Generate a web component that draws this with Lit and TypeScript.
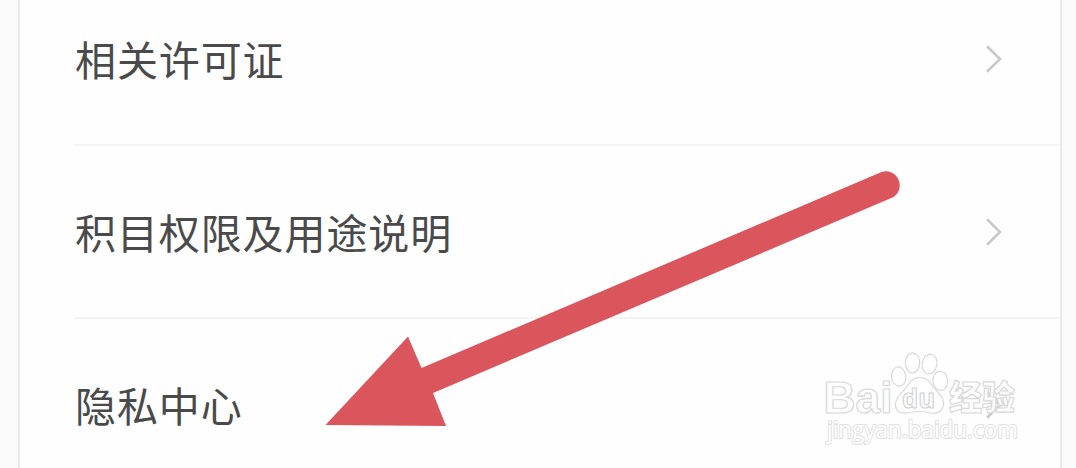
import { css, html, LitElement } from "lit";
import { customElement, property } from "lit/decorators.js";

@customElement("settings-row")
export class SettingsRow extends LitElement {
  @property() label = "";

  static styles = css`
    :host {
      display: flex;
      align-items: center;
      justify-content: space-between;
      box-sizing: border-box;
      height: 173px;
      margin-left: 54px;
      padding: 0 57px 0 1px;
      border-bottom: 2px solid #f4f4f4;
    }

    .label {
      padding-bottom: 1px;
      font-size: 41px;
      line-height: 60px;
      letter-spacing: 0.9px;
      color: #4a4a4a;
      white-space: nowrap;
    }

    svg {
      display: block;
      fill: none;
      stroke: #c9c9c9;
      stroke-width: 2.6;
    }
  `;

  render() {
    return html`
      <span class="label">${this.label}</span>
      <svg width="18" height="30" viewBox="0 0 18 30">
        <path d="M2 2.2L15 15L2 27.8" />
      </svg>
    `;
  }
}

@customElement("baidu-watermark")
export class BaiduWatermark extends LitElement {
  static styles = css`
    :host {
      display: block;
    }

    svg {
      display: block;
      fill: #fff;
      fill-opacity: 0.75;
      stroke: #d8d8d8;
      stroke-width: 1.2;
      stroke-linejoin: round;
    }

    .brand {
      font: bold 44px "Liberation Sans", Arial, sans-serif;
    }

    .du {
      font: bold 27px "Open Sans", sans-serif;
      stroke: #d0d0d0;
    }

    .cjk {
      font: 900 34px "Noto Sans CJK SC", sans-serif;
    }

    .url {
      font: 23px "Open Sans", sans-serif;
      fill-opacity: 1;
      paint-order: stroke;
      stroke: #e0e0e0;
      stroke-width: 2;
    }
  `;

  render() {
    return html`
      <svg width="210" height="110" viewBox="815 345 210 110">
        <text class="brand" x="823.5" y="412.5" textLength="69" lengthAdjust="spacingAndGlyphs">Bai</text>
        <ellipse cx="898.7" cy="376.5" rx="7.2" ry="9.6" transform="rotate(-8 898.7 376.5)" />
        <ellipse cx="912.5" cy="362.8" rx="7.2" ry="10" />
        <ellipse cx="929.5" cy="364" rx="7.4" ry="10" transform="rotate(12 929.5 364)" />
        <ellipse cx="940.3" cy="380.8" rx="7.3" ry="9.7" transform="rotate(-6 940.3 380.8)" />
        <path
          d="M919.5 377.5C912 377.5 909 383 906 388C902 393 896 396 895.5 404C895 411 901 414 907 413C915 411 923 411 931 413C938 414.500 944 410 943.500 402C943 395 937 392 933 387C930 382 927 377.500 919.500 377.500Z"
        />
        <text class="du" x="902" y="408" textLength="33" lengthAdjust="spacingAndGlyphs">du</text>
        <text class="cjk" x="949" y="410" textLength="66" lengthAdjust="spacingAndGlyphs">经验</text>
        <text class="url" x="827" y="438" textLength="191" lengthAdjust="spacingAndGlyphs">jingyan.baidu.com</text>
      </svg>
    `;
  }
}

@customElement("app-root")
export class AppRoot extends LitElement {
  static styles = css`
    :host {
      display: flex;
      position: relative;
      box-sizing: border-box;
      width: 1076px;
      height: 468px;
      padding: 0 14px 0 18px;
      overflow: hidden;
      background: #fafafa;
      font-family: "Noto Sans CJK SC", sans-serif;
    }

    .card {
      display: flex;
      flex: 1;
      flex-direction: column;
      box-sizing: border-box;
      border: solid #e8e8e8;
      border-width: 0 2px;
      background: #fefefe;
    }

    /* the list is scrolled, so the first row is cut at the top */
    .list {
      margin-top: -27px;
    }

    .arrow {
      position: absolute;
      inset: 0;
      fill: #db565c;
    }

    baidu-watermark {
      position: absolute;
      left: 815px;
      top: 345px;
    }
  `;

  render() {
    return html`
      <div class="card">
        <div class="list">
          <settings-row label="相关许可证"></settings-row>
          <settings-row label="积目权限及用途说明"></settings-row>
          <settings-row label="隐私中心"></settings-row>
        </div>
      </div>
      <svg class="arrow" width="1076" height="468" viewBox="0 0 1076 468">
        <path
          d="M325.500 425L408 336.500L421.500 368L881.500 172A14 14 0 0 1 892.500 197.600L433 393L446 426Z"
        />
      </svg>
      <baidu-watermark></baidu-watermark>
    `;
  }
}
